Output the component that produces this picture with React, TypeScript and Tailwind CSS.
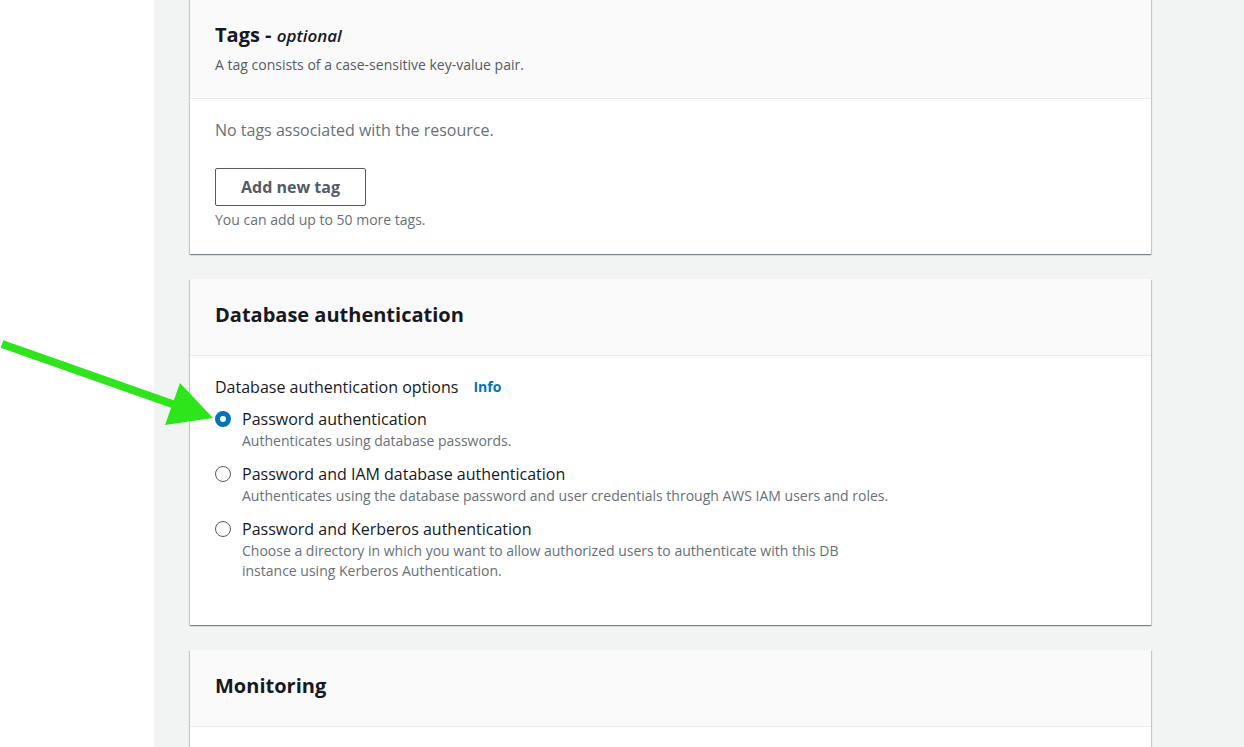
import { useState } from 'react';

const options = [
  {
    id: 'password',
    label: 'Password authentication',
    desc: ['Authenticates using database passwords.'],
  },
  {
    id: 'iam',
    label: 'Password and IAM database authentication',
    desc: ['Authenticates using the database password and user credentials through AWS IAM users and roles.'],
  },
  {
    id: 'kerberos',
    label: 'Password and Kerberos authentication',
    desc: [
      'Choose a directory in which you want to allow authorized users to authenticate with this DB',
      'instance using Kerberos Authentication.',
    ],
  },
];

const cardClass =
  'bg-white shadow-[0_1px_1px_0_rgba(0,28,36,0.3),1px_1px_1px_0_rgba(0,28,36,0.15),-1px_1px_1px_0_rgba(0,28,36,0.15)]';

function Radio({ checked }: { checked: boolean }) {
  return checked ? (
    <span className="w-4 h-4 rounded-full border-[5px] border-[#0073bb] bg-white shrink-0" />
  ) : (
    <span className="w-4 h-4 rounded-full border border-[#545b64] bg-white shrink-0" />
  );
}

export default function App() {
  const [selected, setSelected] = useState('password');

  return (
    <div className="relative flex w-[1244px] h-[747px] overflow-hidden bg-white font-['Open_Sans',sans-serif] text-[#16191f]">
      {/* left white gutter */}
      <div className="w-[154px] shrink-0 bg-white" />

      {/* main content column */}
      <div className="flex-1 bg-[#f2f3f3] pl-[36px] pr-[93px]">
        {/* Tags */}
        <div className={`${cardClass} -mt-[10px]`}>
          <div className="bg-[#fafafa] border-b border-[#eaeded] pt-[33px] pb-[23px] px-[25px]">
            <h2 className="text-[20px] leading-[24px] font-bold">
              Tags - <i className="font-semibold text-[17px]">optional</i>
            </h2>
            <p className="mt-[7px] text-[14px] leading-[20px] text-[#545b64]">
              A tag consists of a case-sensitive key-value pair.
            </p>
          </div>
          <div className="px-[25px] pt-[20px] pb-[24px]">
            <p className="text-[16px] leading-[22px] text-[#687078]">No tags associated with the resource.</p>
            <button className="mt-[27px] h-[38px] w-[151px] border border-[#545b64] rounded-[2px] text-[16px] font-bold text-[#545b64]">
              Add new tag
            </button>
            <p className="mt-[4px] text-[14px] leading-[20px] text-[#687078]">You can add up to 50 more tags.</p>
          </div>
        </div>

        {/* Database authentication */}
        <div className={`${cardClass} mt-[25px]`}>
          <div className="bg-[#fafafa] border-b border-[#eaeded] h-[77px] px-[25px] pb-[5px] flex items-center">
            <h2 className="text-[20px] font-bold">Database authentication</h2>
          </div>
          <div className="px-[25px] pt-[20px] pb-[44px]">
            <div className="flex items-center gap-[15px] text-[16px] leading-[22px]">
              <span>Database authentication options</span>
              <a className="text-[14px] font-bold text-[#0073bb]">Info</a>
            </div>
            <div className="mt-[10px] flex flex-col gap-[12px]">
              {options.map((o) => (
                <label
                  key={o.id}
                  className="flex items-start gap-[11px] cursor-pointer"
                  onClick={() => setSelected(o.id)}
                >
                  <span className="h-[22px] flex items-center">
                    <Radio checked={selected === o.id} />
                  </span>
                  <span>
                    <span className="block text-[16px] leading-[22px]">{o.label}</span>
                    <span className="block mt-[1px] text-[14px] leading-[20px] text-[#687078]">
                      {o.desc.map((d) => (
                        <span key={d} className="block">{d}</span>
                      ))}
                    </span>
                  </span>
                </label>
              ))}
            </div>
          </div>
        </div>

        {/* Monitoring */}
        <div className={`${cardClass} mt-[25px]`}>
          <div className="bg-[#fafafa] border-b border-[#eaeded] h-[77px] px-[25px] pb-[4px] flex items-center">
            <h2 className="text-[20px] font-bold">Monitoring</h2>
          </div>
          <div className="h-[40px]" />
        </div>
      </div>

      {/* annotation arrow */}
      <svg className="absolute left-0 top-[330px] pointer-events-none" width="230" height="110" viewBox="0 0 230 110">
        <line x1="2" y1="14" x2="178" y2="76" stroke="#2ee41a" strokeWidth="8" />
        <polygon points="180,53 165,95 213,88" fill="#2ee41a" />
      </svg>
    </div>
  );
}
